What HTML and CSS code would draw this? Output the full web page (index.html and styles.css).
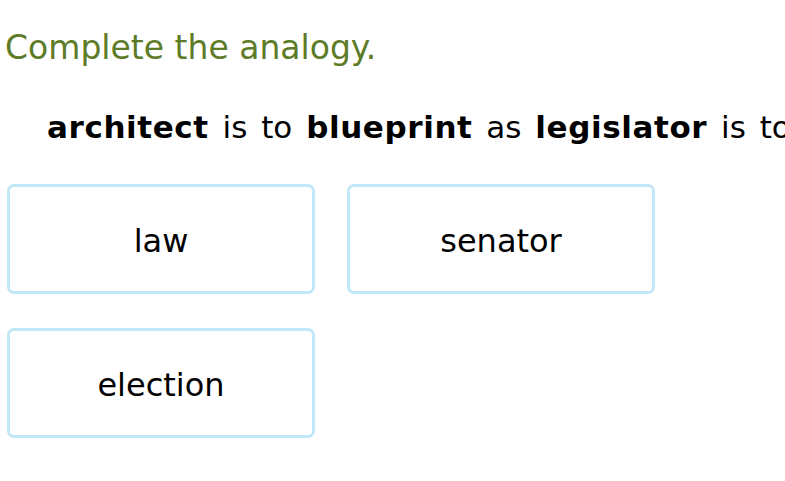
FILE: index.html
```html
<!DOCTYPE html>
<html>
<head>
<meta charset="utf-8">
<link rel="stylesheet" href="styles.css">
</head>
<body>
<div class="page">
  <h1 class="title">Complete the analogy.</h1>
  <p class="analogy"><b>architect</b> is to <b>blueprint</b> as <b>legislator</b> is to</p>
  <div class="choices">
    <div class="choice">law</div>
    <div class="choice">senator</div>
    <div class="choice">election</div>
  </div>
</div>
</body>
</html>
```
FILE: styles.css
```css
html, body {
  margin: 0;
  padding: 0;
  background: #fff;
  overflow: hidden;
}
.page {
  font-family: Verdana, "DejaVu Sans", sans-serif;
  color: #000;
  width: 785px;
  overflow: hidden;
}
.title {
  margin: 0;
  padding: 28px 0 0 5px;
  font-size: 33px;
  font-weight: normal;
  color: #5e7b27;
  line-height: 40px;
}
.analogy {
  margin: 0;
  padding: 41px 0 0 47px;
  font-size: 31px;
  line-height: 36px;
  white-space: nowrap;
  word-spacing: 4px;
}
.analogy b {
  font-weight: bold;
  letter-spacing: 0.6px;
}
.choices {
  display: grid;
  grid-template-columns: 308px 308px;
  column-gap: 32px;
  row-gap: 34px;
  padding: 39px 0 0 7px;
}
.choice {
  height: 110px;
  box-sizing: border-box;
  border: 3px solid #c2e7f7;
  border-radius: 7px;
  display: flex;
  align-items: center;
  justify-content: center;
  padding-top: 3px;
  font-size: 32px;
}
```
